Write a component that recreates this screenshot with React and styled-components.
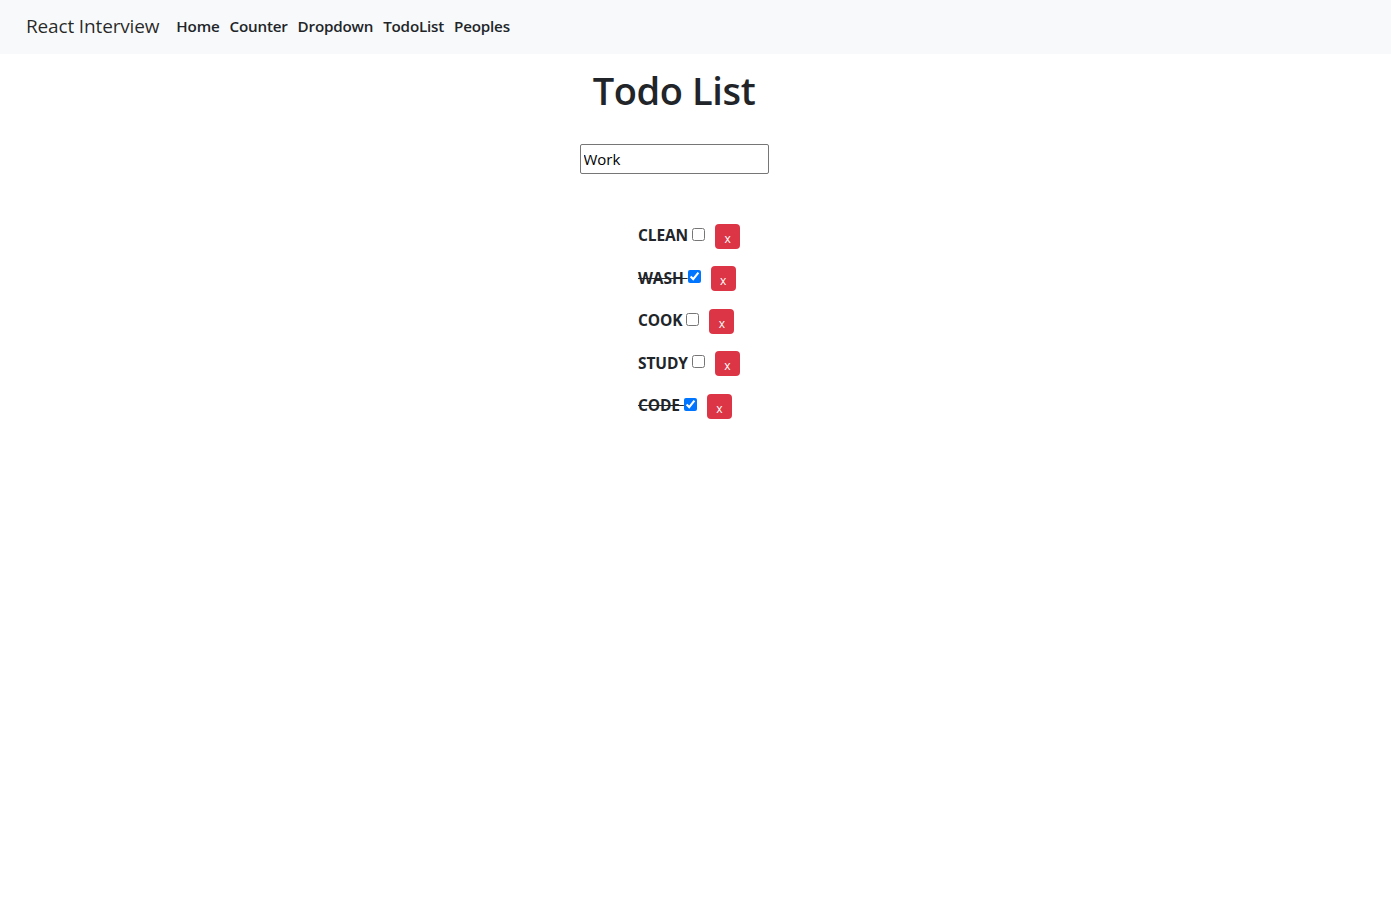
import React, { useState } from "react";
import styled, { createGlobalStyle } from "styled-components";

const Global = createGlobalStyle`
  html, body { margin: 0; padding: 0; background: #fff; }
  body { font-family: "Open Sans", "Noto Sans", sans-serif; color: #212529; }
  * { box-sizing: border-box; }
`;

const Navbar = styled.nav`
  height: 54px;
  background: #f8f9fa;
  display: flex;
  align-items: center;
  padding-left: 26px;
  padding-bottom: 2px;
`;

const Brand = styled.a`
  font-size: 19px;
  color: rgba(0, 0, 0, 0.85);
  margin-right: 17px;
  text-decoration: none;
  letter-spacing: -0.15px;
`;

const NavLinks = styled.div`
  display: flex;
  gap: 10px;
`;

const NavLink = styled.a`
  font-size: 15.2px;
  font-weight: 600;
  color: #212529;
  text-decoration: none;
  letter-spacing: -0.2px;
`;

const Main = styled.main`
  width: 1348px;
  display: flex;
  flex-direction: column;
  align-items: center;
`;

const Title = styled.h1`
  margin: 14px 0 0;
  font-size: 38px;
  font-weight: 600;
  line-height: 1.2;
  color: #212529;
  letter-spacing: -0.4px;
`;

const Input = styled.input`
  margin-top: 30px;
  width: 189px;
  height: 30px;
  font-family: inherit;
  font-size: 15px;
  padding: 1px 3px;
  border: 1px solid #767676;
  border-radius: 2px;
  color: #000;
  outline: none;
`;

const List = styled.ul`
  list-style: none;
  margin: 50px 0 0;
  padding: 0 0 0 30px;
  width: fit-content;
`;

const Item = styled.li`
  display: flex;
  align-items: center;
  height: 25px;
  margin-bottom: 17.5px;
`;

const Label = styled.span`
  font-size: 15.5px;
  font-weight: 700;
  color: #212529;
  white-space: pre;
  letter-spacing: -0.1px;
  margin-bottom: 2px;
  text-decoration: ${(p) => (p.$done ? "line-through" : "none")};
`;

const Check = styled.input`
  width: 13px;
  height: 13px;
  margin: 0 0 4px 0;
`;

const DeleteButton = styled.button`
  margin-left: 10px;
  width: 25px;
  height: 25px;
  padding: 2px 0 0;
  border: none;
  border-radius: 4px;
  background: #dc3545;
  color: #fff;
  font-family: inherit;
  font-size: 12px;
  line-height: 25px;
`;

const initial = [
  { name: "CLEAN", done: false },
  { name: "WASH", done: true },
  { name: "COOK", done: false },
  { name: "STUDY", done: false },
  { name: "CODE", done: true },
];

export default function App() {
  const [todos, setTodos] = useState(initial);
  const [text, setText] = useState("Work");
  return (
    <>
      <Global />
      <Navbar>
        <Brand href="#">React Interview</Brand>
        <NavLinks>
          <NavLink href="#">Home</NavLink>
          <NavLink href="#">Counter</NavLink>
          <NavLink href="#">Dropdown</NavLink>
          <NavLink href="#">TodoList</NavLink>
          <NavLink href="#">Peoples</NavLink>
        </NavLinks>
      </Navbar>
      <Main>
        <Title>Todo List</Title>
        <Input value={text} onChange={(e) => setText(e.target.value)} />
        <List>
          {todos.map((t, i) => (
            <Item key={t.name}>
              <Label $done={t.done}>{t.name + " "}</Label>
              <Check
                type="checkbox"
                checked={t.done}
                onChange={() =>
                  setTodos(todos.map((x, j) => (j === i ? { ...x, done: !x.done } : x)))
                }
              />
              <DeleteButton onClick={() => setTodos(todos.filter((_, j) => j !== i))}>x</DeleteButton>
            </Item>
          ))}
        </List>
      </Main>
    </>
  );
}
